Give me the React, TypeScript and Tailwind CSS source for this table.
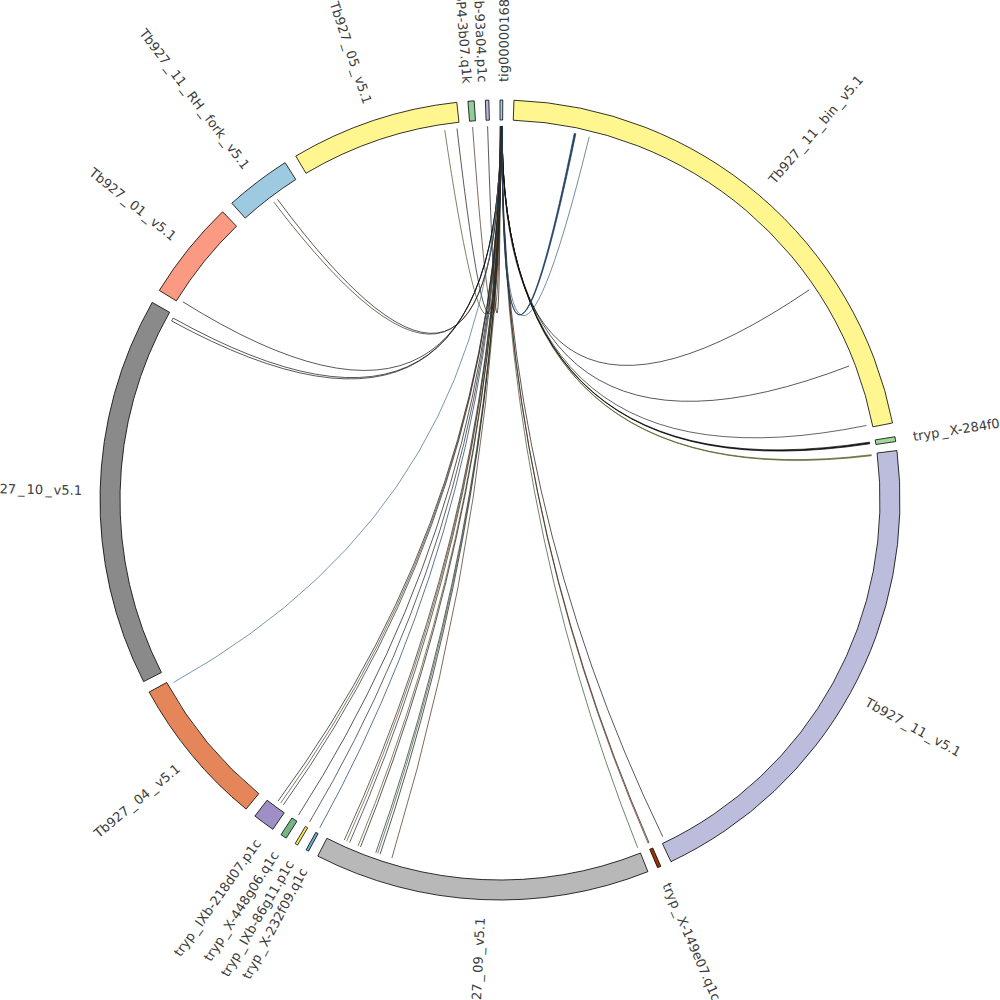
const CX = 500;
const CY = 500;
const R_IN = 380;
const R_OUT = 400;
const R_LINK = 374;
const R_LABEL = 418;

type Seg = {
  t1: number;
  t2: number;
  fill: string;
  label: string;
  at?: number;
};

// contigs, clockwise from 12 o'clock (degrees)
const segs: Seg[] = [
  { t1: 0.0, t2: 0.4, fill: "#a6cee3", label: "tig00000168", at: 0.5 },
  { t1: 2.0, t2: 78.9, fill: "#fff68f", label: "Tb927_11_bin_v5.1" },
  { t1: 80.9, t2: 81.6, fill: "#a1d99b", label: "tryp_X-284f06.q1c" },
  { t1: 82.9, t2: 154.7, fill: "#bcbddc", label: "Tb927_11_v5.1" },
  { t1: 156.3, t2: 156.8, fill: "#993404", label: "tryp_X-149e07.q1c" },
  { t1: 158.3, t2: 207.1, fill: "#b8b8b8", label: "Tb927_09_v5.1" },
  { t1: 208.6, t2: 209.0, fill: "#6baed6", label: "tryp_X-232f09.q1c", at: 208.0 },
  { t1: 210.4, t2: 210.8, fill: "#f5e65a", label: "tryp_IXb-86g11.p1c", at: 210.1 },
  { t1: 212.3, t2: 213.2, fill: "#74b783", label: "tryp_X-448g06.q1c", at: 212.5 },
  { t1: 214.6, t2: 217.8, fill: "#9e8fc6", label: "tryp_IXb-218d07.p1c", at: 215.4 },
  { t1: 219.4, t2: 241.3, fill: "#e5865a", label: "Tb927_04_v5.1" },
  { t1: 243.0, t2: 299.6, fill: "#8a8a8a", label: "Tb927_10_v5.1" },
  { t1: 301.6, t2: 316.1, fill: "#fa9a83", label: "Tb927_01_v5.1" },
  { t1: 317.9, t2: 327.5, fill: "#9ecae1", label: "Tb927_11_RH_fork_v5.1" },
  { t1: 329.3, t2: 353.8, fill: "#fff68f", label: "Tb927_05_v5.1" },
  { t1: 355.4, t2: 356.3, fill: "#8fcf95", label: "tryp_X-6P4-3b07.q1k", at: 355.5 },
  { t1: 357.9, t2: 358.4, fill: "#b8b6d6", label: "tryp_IXb-93a04.p1c", at: 357.6 },
];

// links from tig00000168 to the others: [b1, b2, stroke, fill]
const links: [number, number, string, string][] = [
  [358.1, 358.1, "#111", "none"],
  [355.8, 355.8, "#4a2a1a", "none"],
  [353.4, 353.4, "#111", "none"],
  [351.5, 351.5, "#4a4a2a", "none"],
  [323.5, 323.5, "#111", "none"],
  [322.8, 322.8, "#3a2a1a", "none"],
  [302.0, 302.0, "#111", "none"],
  [298.6, 299.1, "#111", "#ffffff"],
  [240.8, 240.8, "#3d6b8a", "none"],
  [216.4, 216.4, "#111", "none"],
  [215.9, 215.9, "#5a4020", "none"],
  [215.4, 215.4, "#222", "none"],
  [212.6, 212.6, "#111", "none"],
  [210.6, 210.6, "#222", "none"],
  [208.8, 208.8, "#1a3a5a", "none"],
  [204.6, 204.6, "#222", "none"],
  [204.2, 204.2, "#6a4a20", "none"],
  [203.7, 203.7, "#222", "none"],
  [202.3, 202.3, "#5a4a1a", "none"],
  [201.9, 201.9, "#111", "none"],
  [199.4, 199.4, "#222", "none"],
  [199.1, 199.1, "#3a5a3a", "none"],
  [198.7, 198.7, "#111", "none"],
  [196.8, 196.8, "#4a2a1a", "none"],
  [158.4, 158.4, "#2f4f2f", "none"],
  [156.5, 156.5, "#111", "none"],
  [156.65, 156.65, "#5a2a10", "none"],
  [154.2, 154.2, "#111", "none"],
  [83.05, 83.2, "#5f5f30", "#8a8a50"],
  [81.1, 81.35, "#000", "#222"],
  [78.5, 78.5, "#222", "none"],
  [69.0, 69.0, "#111", "none"],
  [55.8, 55.8, "#111", "none"],
  [13.8, 13.8, "#3a5a78", "none"],
  [11.45, 11.7, "#1d3b57", "#1f4a70"],
];

function pt(theta: number, r: number) {
  const a = (theta * Math.PI) / 180;
  return [CX + r * Math.sin(a), CY - r * Math.cos(a)];
}

function f(p: number[]) {
  return `${p[0].toFixed(2)} ${p[1].toFixed(2)}`;
}

function segPath(t1: number, t2: number) {
  const large = t2 - t1 > 180 ? 1 : 0;
  return (
    `M${f(pt(t1, R_OUT))} A${R_OUT} ${R_OUT} 0 ${large} 1 ${f(pt(t2, R_OUT))} ` +
    `L${f(pt(t2, R_IN))} A${R_IN} ${R_IN} 0 ${large} 0 ${f(pt(t1, R_IN))} Z`
  );
}

function linkPath(a1: number, a2: number, b1: number, b2: number) {
  const c = `${CX} ${CY}`;
  if (b1 === b2) {
    return `M${f(pt(a1, R_LINK))} Q${c} ${f(pt(b1, R_LINK))}`;
  }
  return (
    `M${f(pt(a1, R_LINK))} A${R_LINK} ${R_LINK} 0 0 1 ${f(pt(a2, R_LINK))} ` +
    `Q${c} ${f(pt(b1, R_LINK))} A${R_LINK} ${R_LINK} 0 0 1 ${f(pt(b2, R_LINK))} ` +
    `Q${c} ${f(pt(a1, R_LINK))} Z`
  );
}

// the plot's font sets underscores apart from their neighbours
function Spaced({ text }: { text: string }) {
  const parts = text.split("_");
  return (
    <>
      {parts.map((p, i) =>
        i === 0 ? (
          <tspan key={i}>{p}</tspan>
        ) : (
          <tspan key={i}>
            <tspan dx={2}>_</tspan>
            <tspan dx={2}>{p}</tspan>
          </tspan>
        )
      )}
    </>
  );
}

function Label({ seg }: { seg: Seg }) {
  const theta = seg.at ?? (seg.t1 + seg.t2) / 2;
  const [x, y] = pt(theta, R_LABEL);
  const right = theta >= 0 && theta < 180;
  const rot = right ? theta - 90 : theta + 90;
  return (
    <text
      x={x}
      y={y}
      dy="0.35em"
      textAnchor={right ? "start" : "end"}
      transform={`rotate(${rot} ${x} ${y})`}
    >
      <Spaced text={seg.label} />
    </text>
  );
}

export default function App() {
  const n = links.length;
  return (
    <div className="h-[1000px] w-[1000px] overflow-hidden bg-white">
      <svg width={1000} height={1000} viewBox="0 0 1000 1000" className="block">
        <g strokeWidth={0.7}>
          {links.map(([b1, b2, stroke, fill], i) => {
            const a = 0.04 + (0.32 * i) / (n - 1);
            const w = b1 === b2 ? 0 : 0.02;
            return (
              <path
                key={i}
                d={linkPath(a, a + w, b1, b2)}
                fill={fill}
                stroke={stroke}
              />
            );
          })}
        </g>
        <g stroke="#000" strokeWidth={0.8}>
          {segs.map((s) => (
            <path key={s.label} d={segPath(s.t1, s.t2)} fill={s.fill} />
          ))}
        </g>
        <g fontFamily="'DejaVu Sans', 'Liberation Sans', sans-serif" fontSize={13} fill="#3c3c3c">
          {segs.map((s) => (
            <Label key={s.label} seg={s} />
          ))}
        </g>
      </svg>
    </div>
  );
}
